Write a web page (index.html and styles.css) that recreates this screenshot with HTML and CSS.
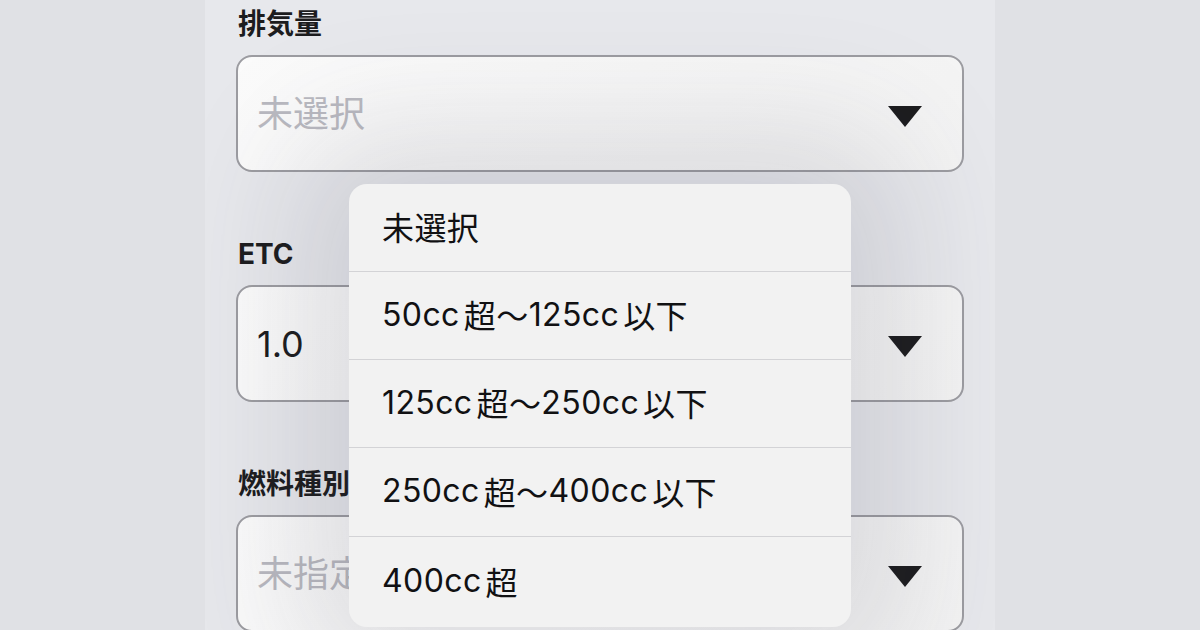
FILE: index.html
```html
<!DOCTYPE html>
<html lang="ja">
<head>
<meta charset="utf-8">
<link rel="stylesheet" href="styles.css">
</head>
<body>
<div class="stage">
  <div class="panel">
    <div class="field">
      <div class="label">排気量</div>
      <div class="select">
        <span class="value placeholder">未選択</span>
        <span class="caret"></span>
      </div>
    </div>
    <div class="field">
      <div class="label">ETC</div>
      <div class="select">
        <span class="value">1.0</span>
        <span class="caret"></span>
      </div>
    </div>
    <div class="field">
      <div class="label">燃料種別</div>
      <div class="select">
        <span class="value placeholder">未指定</span>
        <span class="caret"></span>
      </div>
    </div>

    <ul class="menu">
      <li class="item">未選択</li>
      <li class="item">50cc<span class="jp">超～</span>125cc<span class="jp">以下</span></li>
      <li class="item">125cc<span class="jp">超～</span>250cc<span class="jp">以下</span></li>
      <li class="item tall">250cc<span class="jp">超～</span>400cc<span class="jp">以下</span></li>
      <li class="item">400cc<span class="jp">超</span></li>
    </ul>
  </div>
</div>
</body>
</html>
```

FILE: styles.css
```css
html, body {
  margin: 0;
  padding: 0;
}
body {
  width: 1200px;
  height: 630px;
  overflow: hidden;
  background: #e0e1e5;
  font-family: Inter, "Noto Sans CJK JP", sans-serif;
}
.stage {
  display: flex;
  justify-content: center;
  height: 630px;
}
.panel {
  position: relative;
  width: 790px;
  height: 630px;
  overflow: hidden;
  background: #e7e8ec;
  box-sizing: border-box;
  padding: 8px 31px 0 31px;
}
.field {
  height: 230px;
  display: flex;
  flex-direction: column;
}
.label {
  font-size: 28px;
  line-height: 32px;
  font-weight: 700;
  color: #1c1c1e;
  margin-left: 2px;
  margin-bottom: 15px;
}
.select {
  height: 117px;
  box-sizing: border-box;
  border: 2px solid #9c9ca1;
  border-radius: 16px;
  background: linear-gradient(135deg, #fbfbfb 0%, #f3f3f3 100%);
  display: flex;
  align-items: center;
  justify-content: space-between;
  padding: 0 40px 0 19px;
}
.value {
  font-size: 36px;
  color: #1c1c1e;
  line-height: 42px;
}
.value.placeholder {
  color: #b9b9c0;
}
.caret {
  width: 0;
  height: 0;
  margin-top: 6px;
  border-left: 17px solid transparent;
  border-right: 17px solid transparent;
  border-top: 21px solid #1c1c1e;
}
.menu {
  position: absolute;
  left: 144px;
  top: 184px;
  width: 502px;
  margin: 0;
  padding: 0;
  list-style: none;
  background: #f2f2f2;
  border-radius: 18px;
  box-shadow: 0 0 130px 50px rgba(60, 60, 80, 0.15);
  overflow: hidden;
}
.item {
  height: 88px;
  box-sizing: border-box;
  display: flex;
  align-items: center;
  padding-left: 33px;
  padding-bottom: 3px;
  font-size: 32px;
  letter-spacing: 0.4px;
  color: #111113;
  border-bottom: 1px solid #d3d3d6;
}
.item.tall {
  height: 89px;
}
.item:last-child {
  height: 90px;
  border-bottom: none;
}
.jp {
  margin-left: 4px;
}
```
